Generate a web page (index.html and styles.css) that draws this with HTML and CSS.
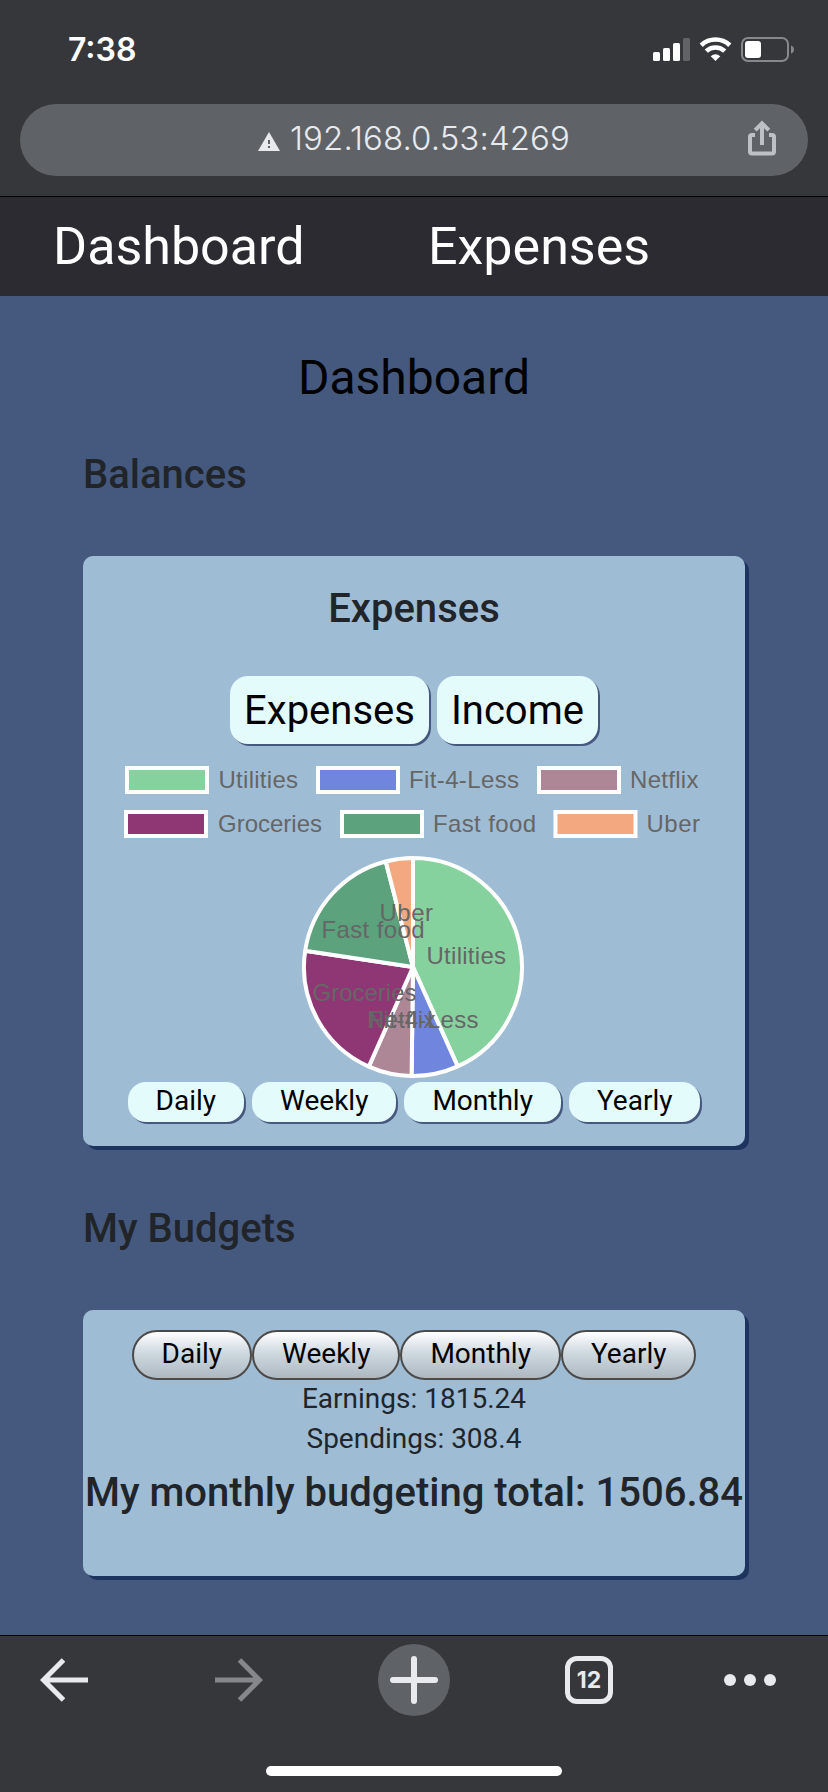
FILE: index.html
```html
<!DOCTYPE html>
<html lang="en">
<head>
<meta charset="utf-8">
<title>Dashboard</title>
<link rel="stylesheet" href="styles.css">
</head>
<body>
<header class="browser-top">
  <div class="status">
    <span class="time">7:38</span>
    <svg class="status-icons" width="144" height="28" viewBox="0 0 144 28">
      <g fill="#fff">
        <rect x="1" y="15" width="7" height="9" rx="1.6"/>
        <rect x="11" y="11" width="7" height="13" rx="1.6"/>
        <rect x="21" y="6" width="7" height="18" rx="1.6"/>
        <rect x="31" y="1" width="7" height="23" rx="1.6" fill="#626365"/>
      </g>
      <g fill="none" stroke="#fff" stroke-width="4.6">
        <path d="M49.2 8.2C57.3 .6 69.700 .6 77.800 8.2"/>
        <path d="M54.300 14.100C59.400 9.200 67.600 9.200 72.700 14.100"/>
      </g>
      <path d="M63.500 24L58.700 19.200Q63.500 15.500 68.300 19.200Z" fill="#fff"/>
      <rect x="90" y="1" width="46" height="23" rx="6" fill="none" stroke="#87888a" stroke-width="2"/>
      <rect x="93" y="4" width="16" height="17" rx="3" fill="#fff"/>
      <path d="M139 8.500q3 1 3 4t-3 4z" fill="#87888a"/>
    </svg>
  </div>
  <div class="address">
    <svg width="22" height="19" viewBox="0 0 22 19"><path d="M11 0L22 19H0Z" fill="#e8eaed"/><path d="M10 8h2v4h-2zM10 14h2v2h-2z" fill="#5f6368"/></svg>
    <span class="url">192.168.0.53:4269</span>
    <svg class="share" width="28" height="36" viewBox="0 0 28 36" fill="none" stroke="#bdc1c6" stroke-width="4"><path d="M7 15H4q-2 0-2 2V31.500q0 2 2 2H24q2 0 2-2V17q0-2-2-2H21"/><path d="M14 25V3.500M7.200 10.200L14 3.400L20.800 10.200"/></svg>
  </div>
</header>
<nav class="nav"><a>Dashboard</a><a>Expenses</a></nav>
<main class="page">
  <h1 class="title">Dashboard</h1>
  <h2 class="section">Balances</h2>
  <section class="card chart-card">
    <h2 class="card-title">Expenses</h2>
    <div class="types"><button class="type">Expenses</button><button class="type">Income</button></div>
    <svg class="chart" width="662" height="336" viewBox="83 746 662 336">
      <g stroke="#fff" stroke-width="4">
        <rect x="127" y="768" width="80" height="24" fill="#86d29e"/>
        <rect x="318" y="768" width="80" height="24" fill="#7086de"/>
        <rect x="539" y="768" width="80" height="24" fill="#ae8796"/>
        <rect x="126" y="812" width="80" height="24" fill="#8f3774"/>
        <rect x="342" y="812" width="80" height="24" fill="#5ba27d"/>
        <rect x="555.500" y="812" width="80" height="24" fill="#f3a880"/>
      </g>
      <g class="chart-text">
        <text x="218.500" y="788" textLength="79.500">Utilities</text>
        <text x="409" y="788" textLength="110">Fit-4-Less</text>
        <text x="630" y="788" textLength="68.500">Netflix</text>
        <text x="218" y="832" textLength="104">Groceries</text>
        <text x="433" y="832" textLength="103">Fast food</text>
        <text x="646.500" y="832" textLength="53.500">Uber</text>
      </g>
      <g stroke="#fff" stroke-width="4" stroke-linejoin="bevel">
        <path d="M413 967V858A109 109 0 0 1 457.700 1066.400Z" fill="#86d29e"/>
        <path d="M413 967L457.700 1066.400A109 109 0 0 1 411.600 1076Z" fill="#7086de"/>
        <path d="M413 967L411.600 1076A109 109 0 0 1 368.800 1066.600Z" fill="#ae8796"/>
        <path d="M413 967L368.800 1066.600A109 109 0 0 1 305.200 950.700Z" fill="#8f3774"/>
        <path d="M413 967L305.200 950.700A109 109 0 0 1 385.700 861.500Z" fill="#5ba27d"/>
        <path d="M413 967L385.700 861.500A109 109 0 0 1 413 858Z" fill="#f3a880"/>
      </g>
      <g class="chart-text">
        <text x="426.500" y="964" textLength="79.500">Utilities</text>
        <text x="368.500" y="1028" textLength="110">Fit-4-Less</text>
        <text x="367" y="1028" textLength="68.500">Netflix</text>
        <text x="312.500" y="1001" textLength="104">Groceries</text>
        <text x="321.500" y="938" textLength="103">Fast food</text>
        <text x="379.500" y="921" textLength="53.500">Uber</text>
      </g>
    </svg>
    <div class="ranges"><button class="range">Daily</button><button class="range">Weekly</button><button class="range">Monthly</button><button class="range">Yearly</button></div>
  </section>
  <h2 class="section section-budgets">My Budgets</h2>
  <section class="card budget-card">
    <div class="periods"><button class="period">Daily</button><button class="period">Weekly</button><button class="period">Monthly</button><button class="period">Yearly</button></div>
    <p class="line first">Earnings: 1815.24</p>
    <p class="line">Spendings: 308.4</p>
    <h2 class="total">My monthly budgeting total: 1506.84</h2>
  </section>
</main>
<footer class="browser-bottom">
  <div class="toolbar">
    <svg width="48" height="44" viewBox="0 0 48 44" fill="none" stroke="#e8eaed" stroke-width="5"><path d="M3 22H48M23.500 2L3.500 22L23.500 42"/></svg>
    <svg class="forward" width="48" height="44" viewBox="0 0 48 44" fill="none" stroke="#868789" stroke-width="5"><path d="M0 22H45M24.500 2L44.500 22L24.500 42"/></svg>
    <svg class="new-tab" width="72" height="72" viewBox="0 0 72 72"><circle cx="36" cy="36" r="36" fill="#5f6368"/><path d="M36 15V57M15 36H57" stroke="#e8eaed" stroke-width="6" stroke-linecap="round"/></svg>
    <span class="tabs">12</span>
    <svg class="more" width="52" height="12" viewBox="0 0 52 12" fill="#e8eaed"><circle cx="6" cy="6" r="6"/><circle cx="26" cy="6" r="6"/><circle cx="46" cy="6" r="6"/></svg>
  </div>
  <div class="home-bar"></div>
</footer>
</body>
</html>
```
FILE: styles.css
```css
* { box-sizing: border-box; }
body { margin: 0; width: 828px; height: 1792px; overflow: hidden; display: flex; flex-direction: column; background: #45597f; font-family: Roboto, sans-serif; color: #212529; }
h1, h2, p { margin: 0; }
button { margin: 0; padding: 0; border: 0; font-family: inherit; color: #000; }
svg { display: block; flex: none; }

.browser-top { height: 197px; flex: none; background: #36373b; border-bottom: 1px solid #000; font-family: Inter, sans-serif; }
.status { height: 104px; padding: 31px 32px 0 68px; display: flex; justify-content: space-between; }
.time { font-size: 32px; line-height: 38px; font-weight: 600; color: #fff; }
.status-icons { margin: 6px 0 0; }
.address { height: 72px; margin: 0 20px; padding: 0 32px 0 238px; border-radius: 36px; background: #5f6368; display: flex; align-items: center; color: #e8eaed; }
.address svg:first-child { margin-top: 2px; }
.url { margin: -4px 0 0 10px; font-size: 33px; font-weight: 350; line-height: 40px; letter-spacing: 0.1px; }
.share { margin: -4px 0 0 auto; }

.nav { height: 99px; flex: none; padding-left: 53px; display: grid; grid-template-columns: 375px 1fr; align-items: center; background: #2b2b31; color: #fff; font-size: 52px; }
.page { height: 1339px; flex: none; padding: 52px 83px 0; }
.title { height: 60px; line-height: 60px; font-size: 48px; font-weight: 400; color: #000; text-align: center; }
.section { margin: 43px 0 57px; height: 48px; line-height: 48px; font-size: 40px; font-weight: 500; }
.section-budgets { margin-top: 59px; }
.card { border-radius: 10px; background: #9fbcd5; box-shadow: 4px 4px 0 #1d345e; text-align: center; }
.chart-card { height: 590px; padding-top: 29px; }
.card-title { height: 48px; line-height: 48px; font-size: 40px; font-weight: 500; }
.types { margin: 43px 0 2px; display: flex; justify-content: center; gap: 8px; }
.type { height: 68px; padding: 0 14px; border-radius: 18px; background: #e4fbfc; box-shadow: 2px 2px 0 #45597f; font-size: 40px; }
.chart-text { font: 24px "Liberation Sans", sans-serif; fill: #666; }
.ranges { display: flex; justify-content: center; gap: 8px; }
.range { height: 40px; padding: 0 28px 3px; border-radius: 18px; background: #e4fbfc; box-shadow: 2px 2px 0 #45597f; font-size: 28px; }
.budget-card { height: 266px; padding-top: 20px; }
.periods { display: flex; justify-content: center; }
.period { height: 50px; padding: 0 28px 4px; border: 2px solid #4c4a48; border-radius: 25px; background: linear-gradient(#fff, #cfd9e0 45%, #adb8c1); font-size: 28px; }
.line { height: 40px; line-height: 40px; font-size: 28px; }
.first { margin-top: -1px; }
.total { margin-top: 10px; height: 48px; line-height: 48px; font-size: 40px; font-weight: 500; white-space: nowrap; }

.browser-bottom { height: 157px; flex: none; border-top: 1px solid #000; background: #36373b; display: flex; flex-direction: column; align-items: center; }
.toolbar { width: 100%; height: 88px; padding-left: 40px; display: flex; align-items: center; }
.forward { margin-left: 127px; }
.new-tab { margin-left: 115px; }
.tabs { margin-left: 115px; width: 48px; height: 48px; border: 5px solid #e8eaed; border-radius: 12px; display: flex; align-items: center; justify-content: center; font: 700 23px Inter, sans-serif; color: #e8eaed; }
.more { margin-left: 111px; }
.home-bar { width: 296px; height: 10px; margin-top: 42px; border-radius: 5px; background: #fff; }
```
